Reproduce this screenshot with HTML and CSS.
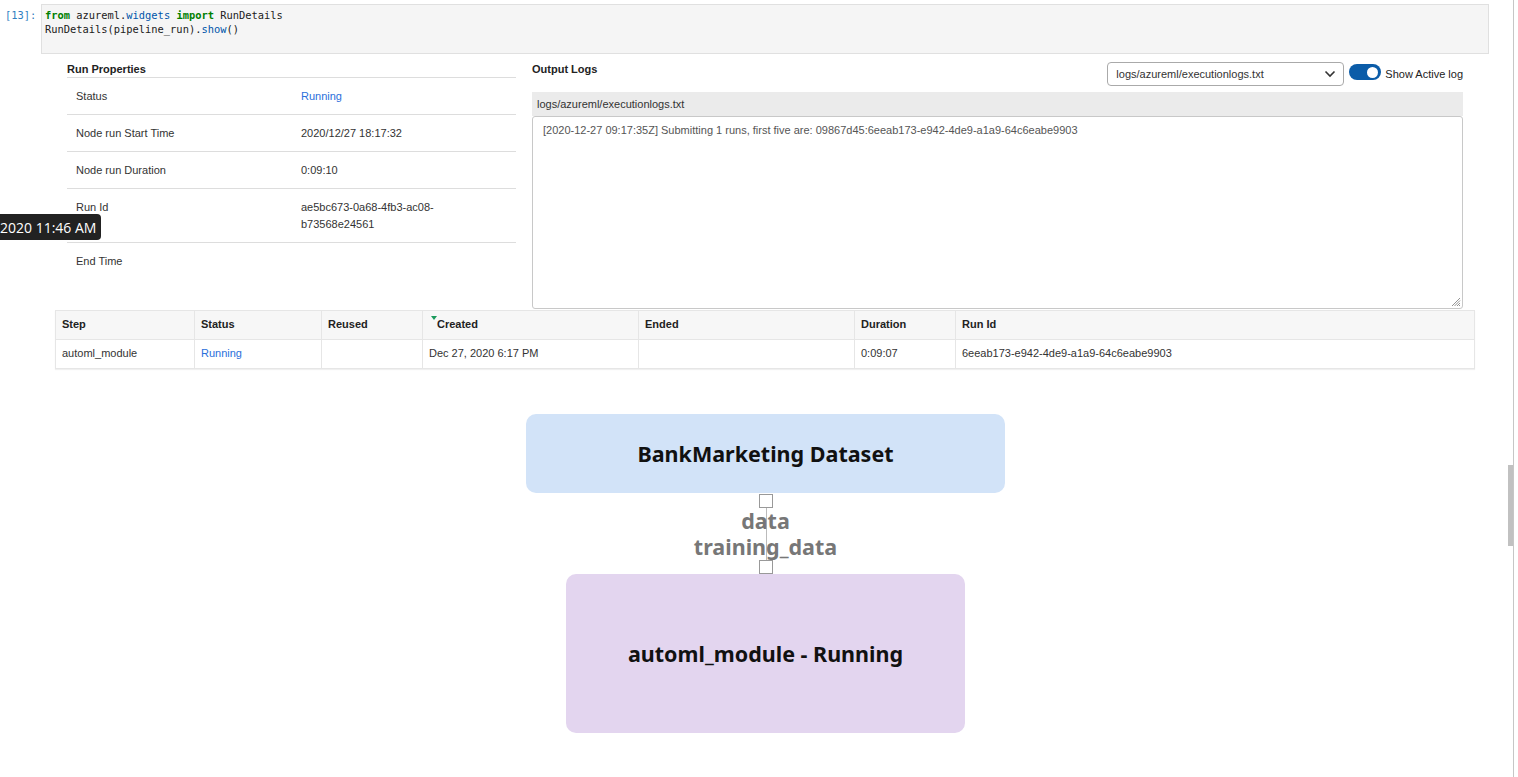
FILE: index.html
```html
<!DOCTYPE html>
<html>
<head>
<meta charset="utf-8">
<title>RunDetails</title>
<link rel="stylesheet" href="styles.css">
</head>
<body>
<div class="screen">
  <main class="notebook">
    <div class="cell">
      <div class="prompt">[13]:</div>
      <div class="input"><pre class="code"><span class="kw">from</span> azureml.<span class="prop">widgets</span> <span class="kw">import</span> RunDetails
RunDetails(pipeline_run).<span class="prop">show</span>()</pre></div>
    </div>

    <div class="output">
      <div class="widget-top">
        <section class="props">
          <h3 class="heading">Run Properties</h3>
          <div class="prop-row"><div class="k">Status</div><div class="v running">Running</div></div>
          <div class="prop-row"><div class="k">Node run Start Time</div><div class="v">2020/12/27 18:17:32</div></div>
          <div class="prop-row"><div class="k">Node run Duration</div><div class="v">0:09:10</div></div>
          <div class="prop-row"><div class="k">Run Id</div><div class="v wrap">ae5bc673-0a68-4fb3-ac08-b73568e24561</div></div>
          <div class="prop-row last"><div class="k">End Time</div><div class="v"></div></div>
        </section>
        <section class="logs">
          <div class="logs-head">
            <h3 class="heading plain">Output Logs</h3>
            <div class="controls">
              <div class="select">
                <span>logs/azureml/executionlogs.txt</span>
                <svg class="chev" width="12" height="8" viewBox="0 0 12 8"><path d="M1.5 1.5 L6 6 L10.5 1.5" fill="none" stroke="#333" stroke-width="1.6"/></svg>
              </div>
              <div class="toggle"><span class="knob"></span></div>
              <span class="toggle-label">Show Active log</span>
            </div>
          </div>
          <div class="log-title">logs/azureml/executionlogs.txt</div>
          <div class="log-box">
            <div class="log-text">[2020-12-27 09:17:35Z] Submitting 1 runs, first five are: 09867d45:6eeab173-e942-4de9-a1a9-64c6eabe9903</div>
            <svg class="grip" width="10" height="10" viewBox="0 0 10 10"><path d="M9 1 L1 9 M9 3.5 L3.5 9 M9 6 L6 9 M9 8 L8 9" stroke="#888" stroke-width="0.9"/></svg>
          </div>
        </section>
      </div>

      <table class="steps">
        <thead>
          <tr>
            <th class="c1">Step</th>
            <th class="c2">Status</th>
            <th class="c3">Reused</th>
            <th class="c4"><span class="sort"></span>Created</th>
            <th class="c5">Ended</th>
            <th class="c6">Duration</th>
            <th class="c7">Run Id</th>
          </tr>
        </thead>
        <tbody>
          <tr>
            <td>automl_module</td>
            <td class="running">Running</td>
            <td></td>
            <td>Dec 27, 2020 6:17 PM</td>
            <td></td>
            <td>0:09:07</td>
            <td>6eeab173-e942-4de9-a1a9-64c6eabe9903</td>
          </tr>
        </tbody>
      </table>

      <div class="diagram">
        <div class="node dataset">BankMarketing Dataset</div>
        <div class="port first"></div>
        <div class="edge">
          <div class="edge-line"></div>
          <div class="edge-label">data</div>
          <div class="edge-label">training_data</div>
        </div>
        <div class="port"></div>
        <div class="node module">automl_module - Running</div>
      </div>
    </div>

    <div class="tooltip">2020 11:46 AM</div>
  </main>
  <div class="vscroll"><div class="thumb"></div></div>
</div>
</body>
</html>
```

FILE: styles.css
```css
html, body {
  margin: 0;
  padding: 0;
  background: #fff;
}
body {
  font-family: "Liberation Sans", Arial, sans-serif;
  font-size: 11px;
  color: #333;
  overflow: hidden;
}
.screen {
  display: flex;
  width: 1518px;
  height: 777px;
}
.notebook {
  position: relative;
  width: 1508px;
  flex: none;
}
.vscroll {
  width: 5px;
  border-right: 1px solid #c6c6c6;
  flex: none;
}
.thumb {
  margin-top: 465px;
  height: 81px;
  background: #c1c1c1;
}

/* code cell */
.cell {
  display: flex;
  padding-top: 4px;
}
.prompt {
  width: 41px;
  flex: none;
  box-sizing: border-box;
  padding: 4px 0 0 5px;
  font-family: "DejaVu Sans Mono", monospace;
  font-size: 10.4px;
  line-height: 14px;
  color: #307fc1;
}
.input {
  width: 1448px;
  height: 50px;
  box-sizing: border-box;
  background: #f5f5f5;
  border: 1px solid #e0e0e0;
  padding: 3px 0 0 3px;
}
.code {
  margin: 0;
  font-family: "DejaVu Sans Mono", monospace;
  font-size: 10.4px;
  line-height: 14px;
  color: #212121;
}
.kw { color: #008000; font-weight: bold; }
.prop { color: #0055aa; }

/* output */
.output {
  padding-left: 55px;
  width: 1420px;
}
.widget-top {
  display: flex;
  gap: 16px;
  padding: 8px 12px 0 12px;
  height: 247px;
}
.props {
  width: 449px;
  flex: none;
}
.heading {
  margin: 0;
  font-size: 11px;
  font-weight: bold;
  line-height: 14px;
  color: #222;
  height: 15px;
  border-bottom: 1px solid #ddd;
}
.heading.plain { border-bottom: none; }
.prop-row {
  display: grid;
  grid-template-columns: 225px 1fr;
  border-bottom: 1px solid #ddd;
  line-height: 17px;
}
.prop-row.last { border-bottom: none; }
.prop-row .k,
.prop-row .v {
  padding: 10px 9px 9px 9px;
  min-height: 17px;
}
.prop-row .v.wrap { max-width: 180px; }
.running { color: #2a6fdb; }

.logs {
  width: 931px;
  flex: none;
}
.logs-head {
  display: flex;
  justify-content: space-between;
  align-items: flex-start;
  height: 30px;
}
.controls {
  display: flex;
  align-items: center;
  height: 24px;
}
.select {
  width: 237px;
  height: 24px;
  box-sizing: border-box;
  border: 1px solid #aaa;
  border-radius: 4px;
  display: flex;
  align-items: center;
  justify-content: space-between;
  padding: 0 7px 0 8px;
  color: #333;
}
.toggle {
  width: 32px;
  height: 16px;
  margin-left: 5px;
  margin-top: -4px;
  border-radius: 8px;
  background: #0b5ca8;
  position: relative;
  flex: none;
}
.knob {
  position: absolute;
  right: 3px;
  top: 2.5px;
  width: 11px;
  height: 11px;
  border-radius: 50%;
  background: #fff;
}
.toggle-label {
  margin-left: 4px;
  color: #222;
}
.log-title {
  height: 24px;
  line-height: 24px;
  background: #ebebeb;
  padding-left: 5px;
  color: #333;
}
.log-box {
  position: relative;
  height: 193px;
  box-sizing: border-box;
  border: 1px solid #c8c8c8;
  border-radius: 3px;
  padding: 6px 10px;
  color: #555;
  line-height: 14px;
}
.grip {
  position: absolute;
  right: 1px;
  bottom: 1px;
}

/* steps table */
.steps {
  margin-top: 1px;
  width: 1420px;
  border-collapse: collapse;
  table-layout: fixed;
  border: 1px solid #e6e6e6;
  box-shadow: 0 1px 1px rgba(0,0,0,0.06);
}
.steps th, .steps td {
  border: 1px solid #e6e6e6;
  text-align: left;
  padding: 0 6px 2px 6px;
  height: 26px;
  font-size: 11px;
}
.steps th {
  background: #f7f7f7;
  font-weight: bold;
  color: #222;
  position: relative;
}
.steps td { color: #333; }
.steps td.running { color: #2a6fdb; }
.c1 { width: 126px; }
.c2 { width: 114px; }
.c3 { width: 88px; }
.steps th.c4 { width: 195px; padding-left: 14px; }
.c5 { width: 203px; }
.c6 { width: 88px; }
.sort {
  position: absolute;
  left: 8px;
  top: 5px;
  width: 0;
  height: 0;
  border-left: 3.5px solid transparent;
  border-right: 3.5px solid transparent;
  border-top: 4px solid #1a9a5c;
}

/* diagram */
.diagram {
  margin-top: 45px;
  display: flex;
  flex-direction: column;
  align-items: center;
  width: 1421px;
}
.node {
  display: flex;
  align-items: center;
  justify-content: center;
  border-radius: 10px;
  font-family: "Noto Sans", "Open Sans", sans-serif;
  font-weight: bold;
  font-size: 21.5px;
  color: #111;
  box-sizing: border-box;
}
.dataset {
  width: 479px;
  height: 79px;
  background: #d2e3f8;
}
.module {
  width: 399px;
  height: 159px;
  background: #e3d5ef;
}
.port {
  width: 12px;
  height: 12px;
  border: 1px solid #999;
  background: #fff;
}
.port.first { margin-top: 1px; }
.edge {
  position: relative;
  height: 52px;
  display: flex;
  flex-direction: column;
  align-items: center;
}
.edge-line {
  position: absolute;
  left: 50%;
  top: 0;
  bottom: 0;
  width: 1px;
  background: #bbb;
}
.edge-label {
  position: relative;
  top: 0;
  font-family: "Noto Sans", "Open Sans", sans-serif;
  font-weight: bold;
  font-size: 21.5px;
  line-height: 26px;
  color: #777;
}

/* tooltip */
.tooltip {
  position: absolute;
  left: 0;
  top: 214px;
  height: 26px;
  line-height: 27px;
  padding-right: 5px;
  background: #222;
  color: #fff;
  border-radius: 0 4px 4px 0;
  font-family: "Open Sans", sans-serif;
  font-size: 14px;
}
```
